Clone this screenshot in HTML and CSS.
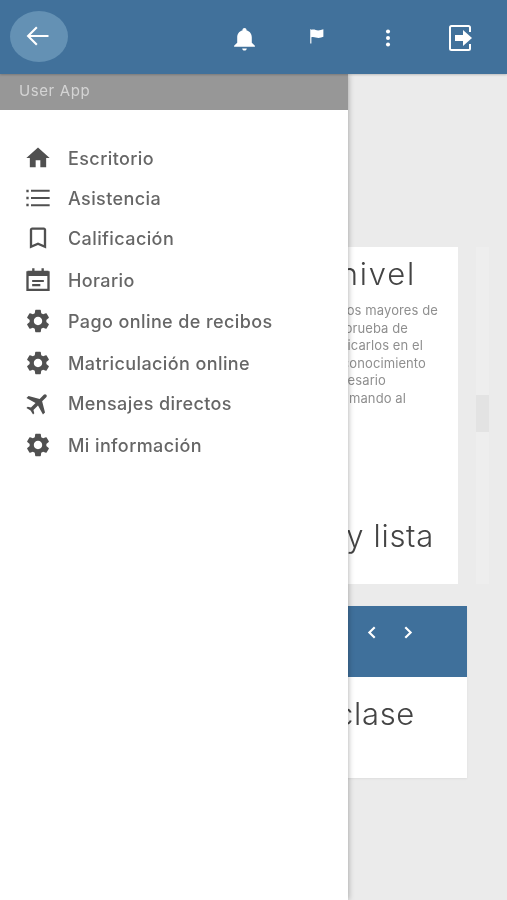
FILE: index.html
```html
<!DOCTYPE html>
<html lang="es">
<head>
<meta charset="utf-8">
<title>User App</title>
<link rel="stylesheet" href="styles.css">
</head>
<body>
<div class="app">
  <header class="topbar">
    <button class="back" aria-label="Volver">
      <svg viewBox="0 0 24 24" class="back-icon"><path d="M21 12H4M11 4.500 3.500 12l7.500 7.500" fill="none" stroke="#fff" stroke-width="1.800"/></svg>
    </button>
    <nav class="actions">
      <svg viewBox="0 0 24 24" class="act bell"><path d="M12 23.500c1.200 0 2.200-.9 2.200-2H9.800c0 1.100 1 2 2.200 2zm7-7.500v-5c0-3.300-1.800-6-5-6.700V4c0-1.100-.9-2-2-2s-2 .9-2 2v.3C6.800 5 5 7.700 5 11v5l-3 3v1h20v-1z" fill="#fff"/></svg>
      <svg viewBox="0 0 24 24" class="act flag"><path d="M3 3h1.500v1c3-1.500 6 .5 9 .5 2.500 0 4.500-.5 7-1.500v10c-2 1-4 1.500-6.500 1.500-3 0-6.500-2-9.500-.8V22H3z" fill="#fff"/></svg>
      <svg viewBox="0 0 24 24" class="act dots"><circle cx="12" cy="5" r="2.200" fill="#fff"/><circle cx="12" cy="12" r="2.200" fill="#fff"/><circle cx="12" cy="19" r="2.200" fill="#fff"/></svg>
      <svg viewBox="0 0 28 28" class="act exit"><path d="M24 8V3.500c0-.8-.7-1.500-1.500-1.500h-17C4.700 2 4 2.700 4 3.500v21c0 .8.700 1.500 1.500 1.500h17c.8 0 1.500-.7 1.500-1.500V20" fill="none" stroke="#fff" stroke-width="2"/><path d="M9 11h8V6l9 8-9 8v-5H9z" fill="#fff"/></svg>
    </nav>
  </header>

  <main class="content">
    <div class="row">
      <section class="card first">
        <h2 class="title t-nivel">de nivel</h2>
        <p class="copy">
          <span class="ln l1">alumnos mayores de</span>
          <span class="ln l2">una prueba de</span>
          <span class="ln l3">ubicarlos en el</span>
          <span class="ln l4">su conocimiento</span>
          <span class="ln l5">necesario</span>
          <span class="ln l6">llamando al</span>
        </p>
        <h2 class="title t-lista">Horarios y lista</h2>
      </section>
      <div class="scroller"><div class="thumb"></div></div>
    </div>
    <section class="card second">
      <div class="card-head">
        <svg viewBox="0 0 10 14" class="chev"><path d="M8 2 3 7l5 5" fill="none" stroke="#fff" stroke-width="2"/></svg>
        <svg viewBox="0 0 10 14" class="chev"><path d="M2 2l5 5-5 5" fill="none" stroke="#fff" stroke-width="2"/></svg>
      </div>
      <h2 class="title t-clase">Próxima clase</h2>
    </section>
  </main>

  <aside class="drawer">
    <div class="drawer-head">User App</div>
    <ul class="menu">
      <li class="item"><svg viewBox="0 0 24 24" class="ico"><path d="M10 20v-6h4v6h5v-8h3L12 3 2 12h3v8z"/></svg>Escritorio</li>
      <li class="item"><svg viewBox="0 0 24 24" class="ico"><path d="M2 5h2v2H2zM2 11h2v2H2zM2 17h2v2H2zM6 5h16v1.600H6zM6 11.200h16v1.600H6zM6 17.400h16V19H6z"/></svg>Asistencia</li>
      <li class="item"><svg viewBox="0 0 24 24" class="ico"><path d="M17 3H7c-1.100 0-2 .9-2 2v16l7-3 7 3V5c0-1.100-.9-2-2-2zm0 15l-5-2.180L7 18V5h10v13z"/></svg>Calificación</li>
      <li class="item gap2"><svg viewBox="0 0 24 24" class="ico"><path d="M3 5.500h18v15H3z" class="cal-box"/><path d="M3 4h18v4.500H3zM7 2h2v3H7zM15 2h2v3h-2zM7 12h10v1.800H7zM7 15.500h7v1.800H7z"/></svg>Horario</li>
      <li class="item gap1"><svg viewBox="0 0 24 24" class="ico"><path d="M19.140 12.940c.04-.3.06-.61.06-.94 0-.32-.02-.64-.07-.94l2.030-1.580c.18-.14.23-.41.12-.61l-1.920-3.320c-.12-.22-.37-.29-.59-.22l-2.390.96c-.5-.38-1.030-.7-1.620-.94l-.36-2.540c-.04-.24-.24-.41-.48-.41h-3.840c-.24 0-.43.17-.47.41l-.36 2.540c-.59.24-1.130.57-1.620.94l-2.390-.96c-.22-.08-.47 0-.59.22L2.740 8.870c-.12.21-.08.47.12.61l2.030 1.580c-.05.3-.09.63-.09.94s.02.64.07.94l-2.030 1.580c-.18.14-.23.41-.12.61l1.920 3.320c.12.22.37.29.59.22l2.390-.96c.5.38 1.030.7 1.620.94l.36 2.540c.05.24.24.41.48.41h3.840c.24 0 .44-.17.47-.41l.36-2.540c.59-.24 1.130-.56 1.620-.94l2.390.96c.22.08.47 0 .59-.22l1.920-3.320c.12-.22.07-.47-.12-.61l-2.010-1.580zM12 15.600c-1.980 0-3.600-1.620-3.600-3.600s1.620-3.600 3.600-3.600 3.600 1.620 3.600 3.600-1.620 3.600-3.600 3.600z"/></svg>Pago online de recibos</li>
      <li class="item gap2"><svg viewBox="0 0 24 24" class="ico"><path d="M19.140 12.940c.04-.3.06-.61.06-.94 0-.32-.02-.64-.07-.94l2.030-1.580c.18-.14.23-.41.12-.61l-1.920-3.320c-.12-.22-.37-.29-.59-.22l-2.390.96c-.5-.38-1.030-.7-1.620-.94l-.36-2.540c-.04-.24-.24-.41-.48-.41h-3.840c-.24 0-.43.17-.47.41l-.36 2.540c-.59.24-1.130.57-1.620.94l-2.390-.96c-.22-.08-.47 0-.59.22L2.740 8.870c-.12.21-.08.47.12.61l2.030 1.580c-.05.3-.09.63-.09.94s.02.64.07.94l-2.030 1.580c-.18.14-.23.41-.12.61l1.920 3.320c.12.22.37.29.59.22l2.390-.96c.5.38 1.030.7 1.620.94l.36 2.540c.05.24.24.41.48.41h3.840c.24 0 .44-.17.47-.41l.36-2.540c.59-.24 1.130-.56 1.620-.94l2.390.96c.22.08.47 0 .59-.22l1.920-3.320c.12-.22.07-.47-.12-.61l-2.010-1.580zM12 15.600c-1.980 0-3.600-1.620-3.600-3.600s1.620-3.600 3.600-3.600 3.600 1.620 3.600 3.600-1.620 3.600-3.600 3.600z"/></svg>Matriculación online</li>
      <li class="item"><svg viewBox="0 0 24 24" class="ico"><path transform="rotate(45 12 12)" d="M22 16v-2.500l-8.500-5V3.500c0-.83-.67-1.500-1.500-1.500s-1.500.67-1.500 1.500v5L2 13.500V16l8.500-2.500V19L8 20.500V22l4-1 4 1v-1.500L13.500 19v-5.500z"/></svg>Mensajes directos</li>
      <li class="item gap2"><svg viewBox="0 0 24 24" class="ico"><path d="M19.140 12.940c.04-.3.06-.61.06-.94 0-.32-.02-.64-.07-.94l2.030-1.580c.18-.14.23-.41.12-.61l-1.920-3.320c-.12-.22-.37-.29-.59-.22l-2.390.96c-.5-.38-1.030-.7-1.620-.94l-.36-2.540c-.04-.24-.24-.41-.48-.41h-3.840c-.24 0-.43.17-.47.41l-.36 2.540c-.59.24-1.130.57-1.620.94l-2.390-.96c-.22-.08-.47 0-.59.22L2.740 8.870c-.12.21-.08.47.12.61l2.030 1.580c-.05.3-.09.63-.09.94s.02.64.07.94l-2.030 1.580c-.18.14-.23.41-.12.61l1.920 3.320c.12.22.37.29.59.22l2.390-.96c.5.38 1.030.7 1.620.94l.36 2.540c.05.24.24.41.48.41h3.840c.24 0 .44-.17.47-.41l.36-2.540c.59-.24 1.130-.56 1.620-.94l2.390.96c.22.08.47 0 .59-.22l1.920-3.320c.12-.22.07-.47-.12-.61l-2.010-1.580zM12 15.600c-1.980 0-3.600-1.620-3.600-3.600s1.620-3.600 3.600-3.600 3.600 1.620 3.600 3.600-1.620 3.600-3.600 3.600z"/></svg>Mi información</li>
    </ul>
  </aside>
</div>
</body>
</html>
```

FILE: styles.css
```css
* { box-sizing: border-box; }
html, body { margin: 0; height: 100%; background: #ebebeb; overflow: hidden; }
body { font-family: "Inter", "Open Sans", sans-serif; }

.app {
  position: relative;
  width: 507px;
  height: 900px;
  overflow: hidden;
  background: #ebebeb;
  filter: blur(0.6px);
}

.topbar {
  position: relative;
  z-index: 3;
  height: 74px;
  display: flex;
  align-items: center;
  justify-content: space-between;
  background: #41719b;
  box-shadow: 0 1px 2px rgba(0, 0, 0, .2);
  padding: 0 33px 0 10px;
}
.back {
  width: 58px;
  height: 51px;
  border: 0;
  border-radius: 50%;
  padding: 0;
  margin-top: -2px;
  display: flex;
  align-items: center;
  justify-content: center;
  background: #6491b4;
}
.back-icon { width: 28px; height: 28px; margin-left: -2px; }
.actions { display: flex; align-items: center; }
.act { display: block; }
.bell { width: 25px; height: 27px; margin-right: 51px; margin-top: 2px; }
.flag { width: 18px; height: 20px; margin-right: 51px; margin-top: -3px; }
.dots { width: 22px; height: 24px; margin-right: 47px; margin-top: 2px; }
.exit { width: 28px; height: 28px; margin-top: 2px; }

.content { padding: 173px 0 0 20px; }
.row { display: flex; gap: 18px; }
.card { background: #fff; }
.first { width: 438px; height: 337px; position: relative; }
.scroller { width: 13px; height: 337px; background: #eeeeee; padding-top: 148px; }
.thumb { height: 37px; background: #e3e3e3; }
.second { width: 447px; height: 172px; margin-top: 22px; box-shadow: 0 1px 2px rgba(0,0,0,.06); }
.card-head {
  height: 71px;
  background: #3f709b;
  display: flex;
  justify-content: flex-end;
  gap: 24px;
  padding: 19px 52px 0 0;
}
.chev { width: 13px; height: 15px; }

.title {
  margin: 0;
  font-weight: 300;
  font-size: 31px;
  letter-spacing: .7px;
  line-height: 36px;
  color: #444;
  text-align: right;
  white-space: nowrap;
}
.t-nivel { padding: 9px 42px 0 0; letter-spacing: 1.800px; }
.t-lista { padding: 0 24px 0 0; margin-top: 111px; }
.t-clase { padding: 19px 52px 0 0; }

.copy {
  margin: 10px 0 0;
  font-size: 13px;
  line-height: 17.500px;
  letter-spacing: .1px;
  color: #8f8f8f;
  text-align: right;
}
.ln { display: block; white-space: nowrap; }
.l1 { padding-right: 20px; }
.l2 { padding-right: 50px; }
.l3 { padding-right: 35px; }
.l4 { padding-right: 32px; }
.l5 { padding-right: 72px; }
.l6 { padding-right: 52px; }

.drawer {
  position: absolute;
  z-index: 2;
  top: 74px;
  left: 0;
  bottom: 0;
  width: 348px;
  background: #fff;
  box-shadow: 0 0 6px rgba(0, 0, 0, .35);
}
.drawer-head {
  height: 36px;
  padding: 7px 0 0 19px;
  background: #979797;
  color: #d4d4d4;
  font-size: 15px;
  letter-spacing: .6px;
  line-height: 20px;
}
.menu { list-style: none; margin: 0; padding: 28px 0 0 24px; }
.item {
  display: flex;
  align-items: center;
  height: 40px;
  color: #666;
  font-size: 18px;
  font-weight: 500;
  letter-spacing: .4px;
  white-space: nowrap;
}
.gap1 { margin-top: 1px; }
.gap2 { margin-top: 2px; }
.ico { width: 28px; height: 28px; margin-right: 16px; flex: none; fill: #505050; }
.ico .cal-box { fill: none; stroke: #505050; stroke-width: 2; }
```
